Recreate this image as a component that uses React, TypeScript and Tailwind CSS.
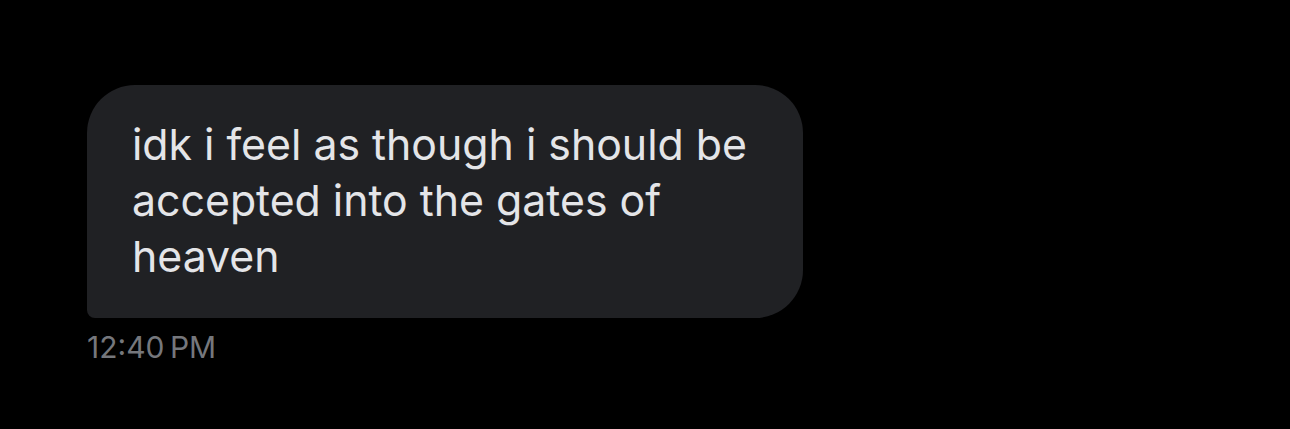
export default function App() {
  return (
    <div className="w-[1290px] h-[429px] bg-black pt-[85px] pl-[87px] font-['Inter',sans-serif]">
      <div className="flex flex-col items-start">
        <div className="w-[716px] h-[233px] bg-[#202124] rounded-[48px] rounded-bl-[8px] pl-[45px] pt-[32px]">
          <p className="text-[#e4e5e8] text-[42.8px] leading-[56px]">
            idk i feel as though i should be
            <br />
            accepted into the gates of
            <br />
            heaven
          </p>
        </div>
        <div className="mt-[13px] text-[#75777c] text-[30px] leading-[32px] [word-spacing:-3px]">12:40 PM</div>
      </div>
    </div>
  )
}
